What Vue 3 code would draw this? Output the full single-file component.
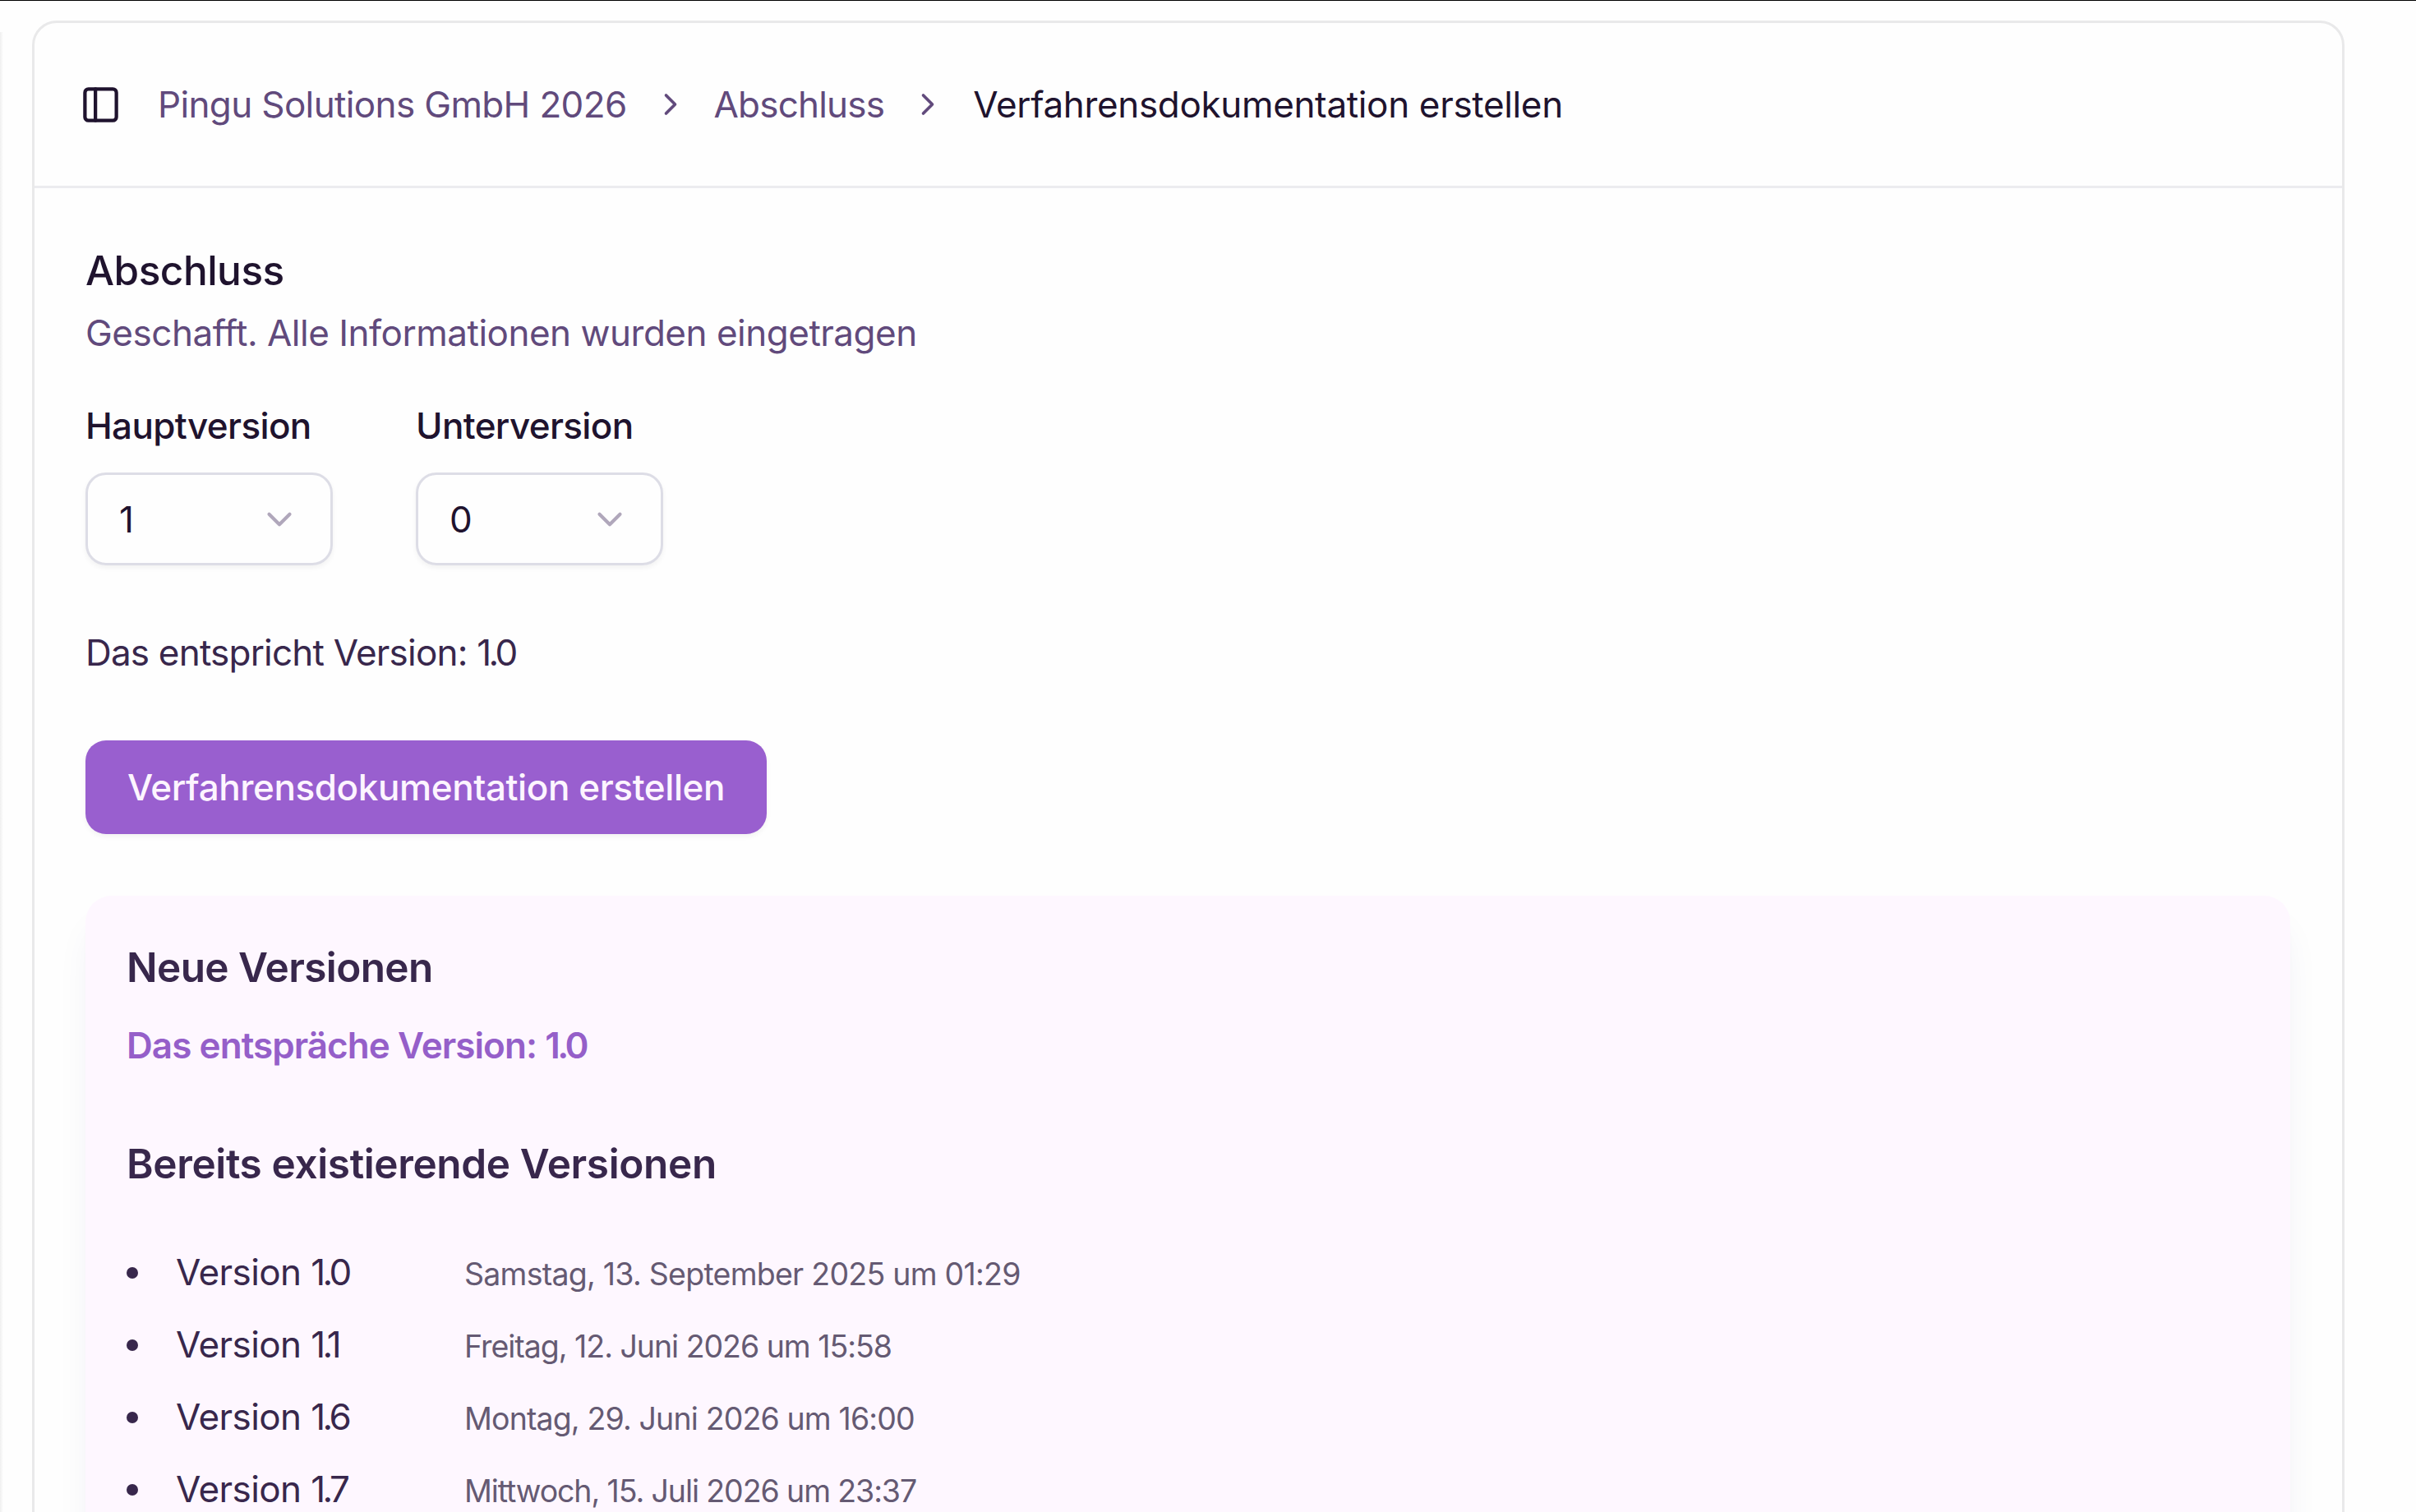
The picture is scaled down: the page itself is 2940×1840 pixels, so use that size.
<script setup>
const versions = [
  { number: '1.0', date: 'Samstag, 13. September 2025 um 01:29', tracking: -0.75 },
  { number: '1.1', date: 'Freitag, 12. Juni 2026 um 15:58', tracking: -1.03 },
  { number: '1.6', date: 'Montag, 29. Juni 2026 um 16:00', tracking: -0.86 },
  { number: '1.7', date: 'Mittwoch, 15. Juli 2026 um 23:37', tracking: -1.1 },
]
const selects = [
  { label: 'Hauptversion', value: '1' },
  { label: 'Unterversion', value: '0' },
]
</script>

<template>
  <div class="app">
    <div class="sidebar-edge"></div>
    <main class="card">
      <header class="header">
        <svg class="panel-icon" viewBox="0 0 24 24">
          <rect x="3" y="3" width="18" height="18" rx="2" />
          <path d="M9 3v18" />
        </svg>
        <nav class="crumbs">
          <a class="crumb first">Pingu Solutions GmbH 2026</a>
          <svg class="sep" viewBox="0 0 24 24"><path d="m9 18 6-6-6-6" /></svg>
          <a class="crumb second">Abschluss</a>
          <svg class="sep" viewBox="0 0 24 24"><path d="m9 18 6-6-6-6" /></svg>
          <span class="crumb current">Verfahrensdokumentation erstellen</span>
        </nav>
      </header>

      <section class="content">
        <h1 class="title">Abschluss</h1>
        <p class="subtitle">Geschafft. Alle Informationen wurden eingetragen</p>

        <div class="fields">
          <div v-for="s in selects" :key="s.label" class="field">
            <label class="label">{{ s.label }}</label>
            <div class="select">
              <span>{{ s.value }}</span>
              <svg class="chevron" viewBox="0 0 24 24"><path d="m6 9 6 6 6-6" /></svg>
            </div>
          </div>
        </div>

        <p class="result">Das entspricht Version: <span class="num">1.0</span></p>
        <button class="button">Verfahrensdokumentation erstellen</button>

        <section class="panel">
          <h2 class="heading new">Neue Versionen</h2>
          <p class="next">Das entspräche Version: <span class="num">1.0</span></p>
          <h2 class="heading existing">Bereits existierende Versionen</h2>
          <ul class="list">
            <li v-for="v in versions" :key="v.number" class="row">
              <span class="bullet"></span>
              <span class="version">Version <span class="num">{{ v.number }}</span></span>
              <span class="date" :style="{ letterSpacing: v.tracking + 'px' }">{{ v.date }}</span>
            </li>
          </ul>
        </section>
      </section>
    </main>
  </div>
</template>

<style>
body {
  background: #fefefe;
}
</style>

<style scoped>
.app {
  box-sizing: border-box;
  width: 2940px;
  height: 1840px;
  overflow: hidden;
  display: flex;
  border-top: 1px solid #000;
  background: #fefefe;
  color: #38274c;
  font-family: Inter, "Liberation Sans", sans-serif;
  font-size: 44px;
  line-height: 64px;
}
.sidebar-edge {
  width: 4px;
  margin: 38px 35px 0 0;
  background: linear-gradient(to right, #efefef, #fefefe);
}
.card {
  box-sizing: border-box;
  width: 2814px;
  height: 1900px;
  flex: none;
  margin-top: 24px;
  border: 3px solid #e9e9ea;
  border-radius: 30px;
}
.header {
  box-sizing: border-box;
  height: 201px;
  display: flex;
  align-items: center;
  padding-left: 55px;
  border-bottom: 3px solid #ececef;
}
svg {
  flex: none;
  fill: none;
  stroke: currentColor;
  stroke-width: 2;
  stroke-linecap: round;
  stroke-linejoin: round;
}
.panel-icon {
  width: 51px;
  height: 51px;
  margin-right: 44px;
  color: #1f132e;
}
.crumbs {
  display: flex;
  align-items: center;
  gap: 31px;
  color: #614a7c;
}
.crumb {
  white-space: nowrap;
}
.first {
  letter-spacing: -0.64px;
}
.second {
  letter-spacing: -0.8px;
}
.current {
  margin-left: 2px;
  letter-spacing: -0.34px;
  color: #1f132e;
}
.sep {
  width: 44px;
  height: 44px;
}
.content {
  padding: 68px 63px 0 62px;
}
h1,
h2,
p,
ul {
  margin: 0;
}
.title {
  font-size: 49.5px;
  font-weight: 500;
  letter-spacing: -0.51px;
  color: #1f132e;
}
.subtitle {
  margin-top: 12px;
  letter-spacing: -0.49px;
  color: #614a7c;
}
.fields {
  display: flex;
  gap: 101px;
  margin-top: 57px;
  color: #1f132e;
}
.field {
  width: 301px;
}
.label {
  display: block;
  margin-bottom: 33px;
  line-height: 48px;
  font-weight: 500;
  letter-spacing: -0.65px;
}
.select {
  box-sizing: border-box;
  height: 113px;
  display: flex;
  align-items: center;
  justify-content: space-between;
  padding: 0 37px 0 38px;
  border: 3px solid #dddde6;
  border-radius: 25px;
  box-shadow: 0 3px 6px rgba(0, 0, 0, 0.05);
}
.chevron {
  width: 50px;
  height: 50px;
  color: #b0a7bb;
}
.result {
  margin-top: 74px;
  letter-spacing: -0.8px;
}
.num {
  letter-spacing: -3.6px;
}
.button {
  display: block;
  width: 829px;
  height: 114px;
  margin-top: 75px;
  padding: 0;
  border: 0;
  border-radius: 25px;
  background: #995fcf;
  color: #fdf5ff;
  font: inherit;
  font-weight: 500;
  letter-spacing: -0.41px;
  box-shadow: 0 3px 6px rgba(0, 0, 0, 0.05);
}
.panel {
  height: 900px;
  box-sizing: border-box;
  margin-top: 75px;
  padding: 55px 50px 0;
  border-radius: 32px;
  background: #fef7ff;
  box-shadow: 0 32px 48px -10px rgba(40, 40, 130, 0.07), 0 13px 19px -13px rgba(40, 40, 130, 0.07);
}
.heading {
  font-size: 49.5px;
  font-weight: 600;
}
.new {
  letter-spacing: -0.6px;
}
.next {
  margin-top: 31px;
  font-weight: 600;
  letter-spacing: -0.93px;
  color: #955fc9;
}
.existing {
  margin-top: 80px;
  letter-spacing: -0.36px;
}
.list {
  margin-top: 56px;
  padding: 0;
  list-style: none;
}
.row {
  height: 88px;
  display: flex;
  align-items: baseline;
  line-height: 88px;
}
.bullet {
  width: 14px;
  height: 14px;
  margin: 2px 46px 0 0;
  border-radius: 50%;
  background: #38274c;
  align-self: center;
}
.version {
  width: 351px;
  letter-spacing: -0.6px;
}
.date {
  font-size: 37.5px;
  color: #655a73;
}
</style>
